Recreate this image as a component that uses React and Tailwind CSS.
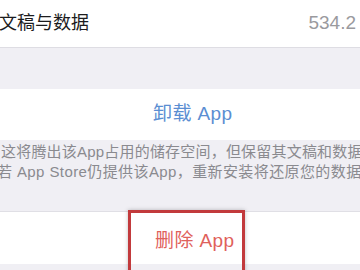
import React from 'react';

const font = { fontFamily: '"Liberation Sans", "Noto Sans CJK SC", sans-serif' };

export default function App() {
  return (
    <div className="relative w-[360px] h-[270px] overflow-hidden bg-[#f0eff4]" style={font}>
      {/* Documents & data row */}
      <div className="h-[48px] bg-white border-b border-[#dedde3] flex items-center justify-between">
        <span className="text-[18px] text-[#1c1c1e] -ml-[1px]">文稿与数据</span>
        <span className="text-[19px] text-[#9a9a9e] pr-[4px]">534.2</span>
      </div>

      <div className="h-[41px]" />

      {/* Offload */}
      <div className="h-[51px] bg-white flex items-center pl-[153px]">
        <span className="text-[19px] tracking-[0.4px] text-[#5b8ed2]">卸载 App</span>
      </div>

      {/* Footer note */}
      <div className="h-[71px] pt-[2px] text-[15px] leading-[20px] text-[#8a8a8f] whitespace-nowrap">
        <div className="ml-[1px] tracking-[0.2px]">这将腾出该App占用的储存空间，但保留其文稿和数据</div>
        <div className="-ml-[3px] tracking-[0.4px]">若 App Store仍提供该App，重新安装将还原您的数据</div>
      </div>

      {/* Delete */}
      <div className="h-[53px] bg-white border-t border-[#e0dfe5] flex items-center pl-[155px] pt-[6px]">
        <span className="text-[19px] tracking-[0.4px] text-[#df615b]">删除 App</span>
      </div>

      {/* annotation box */}
      <div className="absolute left-[128px] top-[210px] w-[117px] h-[80px] border-[3px] border-[#c23a3c] shadow-[0_0_4px_rgba(0,0,0,0.25)]" />
    </div>
  );
}
